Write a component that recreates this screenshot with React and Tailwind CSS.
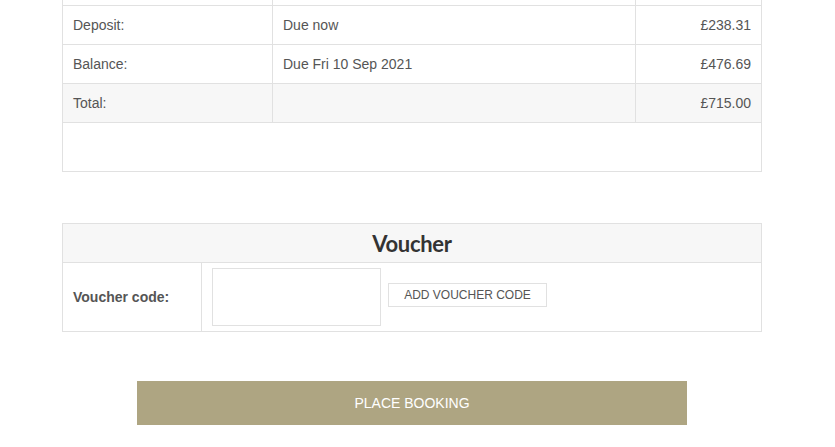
export default function App() {
  const cell = "border border-[#e1e1e1] px-[10px] h-[39px] align-middle";
  return (
    <div className="w-[835px] h-[447px] overflow-hidden bg-white text-[14px] text-[#555]" style={{ fontFamily: '"Liberation Sans", Arial, sans-serif' }}>
      <div className="w-[700px] ml-[62px] mt-[-34px]">
        <table className="w-full border-collapse">
          <colgroup>
            <col className="w-[210px]" />
            <col className="w-[363px]" />
            <col />
          </colgroup>
          <tbody>
            <tr>
              <td className={cell}></td>
              <td className={cell}></td>
              <td className={cell}></td>
            </tr>
            <tr>
              <td className={cell}>Deposit:</td>
              <td className={cell}>Due now</td>
              <td className={cell + " text-right"}>£238.31</td>
            </tr>
            <tr>
              <td className={cell}>Balance:</td>
              <td className={cell}>Due Fri 10 Sep 2021</td>
              <td className={cell + " text-right"}>£476.69</td>
            </tr>
            <tr className="bg-[#f7f7f7]">
              <td className={cell}>Total:</td>
              <td className={cell}></td>
              <td className={cell + " text-right"}>£715.00</td>
            </tr>
            <tr>
              <td colSpan={3} className="border border-[#e1e1e1] h-[49px]"></td>
            </tr>
          </tbody>
        </table>

        <table className="w-full border-collapse mt-[51px]">
          <colgroup>
            <col className="w-[139px]" />
            <col />
          </colgroup>
          <tbody>
            <tr className="bg-[#f7f7f7]">
              <td colSpan={2} className="border border-[#e1e1e1] h-[39px] text-center align-middle">
                <span className="text-[22px] font-bold text-[#333] tracking-[-0.3px]" style={{ fontFamily: 'Lato, "Open Sans", sans-serif' }}>Voucher</span>
              </td>
            </tr>
            <tr>
              <td className="border border-[#e1e1e1] px-[10px] h-[69px] align-middle font-bold">Voucher code:</td>
              <td className="border border-[#e1e1e1] pl-[10px] align-middle">
                <div className="flex items-start">
                  <div className="w-[169px] h-[58px] border border-[#e1e1e1] bg-white"></div>
                  <button className="ml-[7px] mt-[15px] w-[159px] h-[24px] border border-[#e1e1e1] bg-white text-[12px] text-[#555] uppercase">Add voucher code</button>
                </div>
              </td>
            </tr>
          </tbody>
        </table>

        <div className="flex justify-center mt-[49px]">
          <button className="w-[550px] h-[44px] bg-[#aea582] text-white text-[14px] uppercase">Place booking</button>
        </div>
      </div>
    </div>
  );
}
